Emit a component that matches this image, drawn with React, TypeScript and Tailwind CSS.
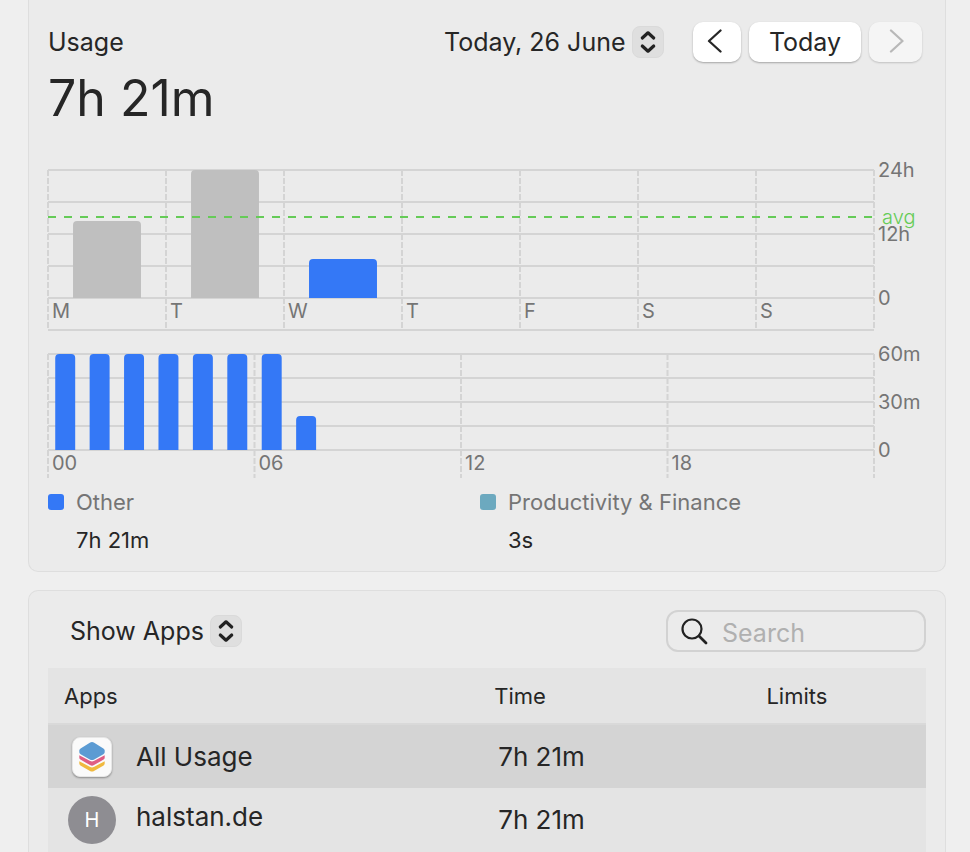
import { useState } from "react";
import type { ReactNode } from "react";

const WEEK = [
  { day: "M", hours: 14.4 },
  { day: "T", hours: 24 },
  { day: "W", hours: 7.35, today: true },
  { day: "T", hours: 0 },
  { day: "F", hours: 0 },
  { day: "S", hours: 0 },
  { day: "S", hours: 0 },
];

const MINUTES = [60, 60, 60, 60, 60, 60, 60, 21];

const LEGEND = [
  { name: "Other", time: "7h 21m", swatch: "bg-[#3478f6]" },
  { name: "Productivity & Finance", time: "3s", swatch: "bg-[#6ca9bf]" },
];

function Stepper() {
  return (
    <span className="pointer-events-none absolute right-0 flex size-8 items-center justify-center rounded-lg border border-[#dadada] bg-[#dfdfdf]">
      <svg width="16" height="24" viewBox="0 0 16 24" fill="none" stroke="#222" strokeWidth="3.2" strokeLinecap="round" strokeLinejoin="round">
        <path d="M2.3 8 8 2.8 13.700 8M2.300 16 8 21.200 13.700 16" />
      </svg>
    </span>
  );
}

function PopUp({ label, options }: { label: string; options: string[] }) {
  return (
    <div className="relative flex items-center">
      <select aria-label={label} className="h-8 appearance-none bg-transparent pr-[38px] text-[25px] leading-8 outline-none">
        {options.map((o) => (
          <option key={o}>{o}</option>
        ))}
      </select>
      <Stepper />
    </div>
  );
}

type PlotProps = {
  rows: number[];
  columns: number;
  plotHeight: number;
  height: number;
  yLabels: { y: number; text: string }[];
  xLabels: string[];
  children: ReactNode;
  title: string;
};

// Grid, axis labels and bars. x is in percent so the plot follows its container.
function Plot({ rows, columns, plotHeight, height, yLabels, xLabels, children, title }: PlotProps) {
  return (
    <svg role="img" aria-label={title} width="100%" height={height} className="block overflow-visible text-[20px]">
      <g stroke="#d4d4d4" strokeWidth="2">
        {rows.map((y) => (
          <line key={y} x1="0" x2="100%" y1={y} y2={y} />
        ))}
        {Array.from({ length: columns + 1 }, (_, i) => (
          <line key={i} x1={`${(i * 100) / columns}%`} x2={`${(i * 100) / columns}%`} y1="0" y2={height} strokeDasharray="6 2" />
        ))}
      </g>
      <svg width="100%" height={plotHeight}>
        {children}
      </svg>
      <g fill="#757575">
        {xLabels.map((text, i) => (
          <text key={i} x={`${(i * 100) / columns}%`} dx="4" y={plotHeight + 20}>
            {text}
          </text>
        ))}
        {yLabels.map(({ y, text }) => (
          <text key={y} x="100%" dx="4" y={y + 7}>
            {text}
          </text>
        ))}
      </g>
    </svg>
  );
}

function WeekChart() {
  return (
    <div className="relative">
      <Plot
        title="Usage per day"
        rows={[0, 32, 64, 96, 128, 160]}
        columns={7}
        plotHeight={128}
        height={160}
        xLabels={WEEK.map((d) => d.day)}
        yLabels={[
          { y: 0, text: "24h" },
          { y: 64, text: "12h" },
          { y: 128, text: "0" },
        ]}
      >
        {WEEK.filter((d) => d.hours > 0).map((d, i) => {
          const h = Math.round((d.hours / 24) * 128);
          return (
            <rect
              key={i}
              x={`${((i + 0.212) * 100) / 7}%`}
              y={128 - h}
              width={`${57.6 / 7}%`}
              height={h + 8}
              rx="4"
              fill={d.today ? "#3478f6" : "#bfbfbf"}
            />
          );
        })}
        <line x1="0" x2="100%" y1="47" y2="47" stroke="#65cb57" strokeWidth="2" strokeDasharray="8 8" />
      </Plot>
      <span className="absolute top-[35px] left-full ml-2 text-[20px] leading-6 font-light text-[#65cb57]">avg</span>
    </div>
  );
}

function DayChart() {
  return (
    <Plot
      title="Usage per hour"
      rows={[0, 24, 48, 72, 96]}
      columns={4}
      plotHeight={96}
      height={124}
      xLabels={["00", "06", "12", "18"]}
      yLabels={[
        { y: 0, text: "60m" },
        { y: 48, text: "30m" },
        { y: 96, text: "0" },
      ]}
    >
      {MINUTES.map((m, i) => {
        const h = Math.round((m / 60) * 96);
        return (
          <rect key={i} x={`${((i + 0.21) * 100) / 24}%`} y={96 - h} width={`${58 / 24}%`} height={h + 8} rx="4" fill="#3478f6" />
        );
      })}
    </Plot>
  );
}

function Chevron({ d }: { d: string }) {
  return (
    <svg width="16" height="26" viewBox="0 0 16 26" fill="none" stroke="currentColor" strokeWidth="2.3" strokeLinecap="round" strokeLinejoin="round">
      <path d={d} />
    </svg>
  );
}

function AllUsageIcon() {
  return (
    <span className="flex size-10 items-center justify-center rounded-lg border border-[#e6e6e6] bg-[#fafafa] shadow-[0_1px_2px_rgba(0,0,0,0.35)]">
      <svg width="26" height="30" viewBox="0 0 26 30">
        <path d="M.3 19.2 11.2 25q1.8.9 3.6 0L25.7 19.2V21.6q0 1.2-1.1 1.8L15 28.9q-2 1.1-4 0L1.4 23.4Q.3 22.8.3 21.6Z" fill="#f0b93f" />
        <path d="M.3 13.2 11.2 19q1.8.9 3.6 0L25.7 13.2V15.8q0 1.2-1.1 1.8L15 23.1q-2 1.1-4 0L1.4 17.6Q.3 17 .3 15.8Z" fill="#df5d83" />
        <path
          d="M10.8.7q2.200-1.200 4.400 0l9.200 5.700q1.300.8 1.300 1.900v2q0 1.100-1.300 1.900l-9.200 5.300q-2.200 1.200-4.400 0L1.600 12.200Q.3 11.400.3 10.300v-2Q.3 7.200 1.600 6.400Z"
          fill="#5b9bd3"
          stroke="#fafafa"
          strokeWidth="1"
          paintOrder="stroke"
        />
      </svg>
    </span>
  );
}

export default function App() {
  const [query, setQuery] = useState("");

  return (
    <div className="flex min-h-screen flex-col bg-[#efefef] pr-6 pl-7 font-['Inter',sans-serif] text-[#262626]">
      {/* Usage */}
      <section className="rounded-b-[10px] border border-t-0 border-[#dedede] bg-[#ebebeb] px-[19px] pt-[22px] pb-[17px]">
        <header className="flex h-10 items-center gap-2 pr-1">
          <h1 className="mr-auto text-[25px] leading-8">Usage</h1>
          <div className="mr-[21px]">
            <PopUp label="Date" options={["Today, 26 June"]} />
          </div>
          <button
            aria-label="Previous day"
            className="flex h-10 w-12 items-center justify-center rounded-[10px] bg-white pr-1 shadow-[0_1px_2px_rgba(0,0,0,0.3)]"
          >
            <Chevron d="M13.5 1.5 2 12 13.5 22.5" />
          </button>
          <button className="h-10 w-28 rounded-[10px] bg-white text-[25px] leading-8 shadow-[0_1px_2px_rgba(0,0,0,0.3)]">Today</button>
          <button
            aria-label="Next day"
            disabled
            className="flex h-10 w-[53px] items-center justify-center rounded-[10px] bg-[#f5f5f5] text-[#b8b8b8] shadow-[0_1px_2px_rgba(0,0,0,0.18)]"
          >
            <Chevron d="M3 1.5 14.5 12 3 22.5" />
          </button>
        </header>
        <p className="mt-2 text-[50px] leading-[56px]">7h 21m</p>

        <div className="mt-11 space-y-6 pr-[52px]">
          <WeekChart />
          <DayChart />
        </div>

        <dl className="mt-2.5 grid grid-cols-2 pr-3.5 text-[22px] leading-7">
          {LEGEND.map((item) => (
            <div key={item.name}>
              <dt className="flex items-center gap-3 text-[#757575]">
                <span className={`size-4 rounded-[3px] ${item.swatch}`} />
                {item.name}
              </dt>
              <dd className="mt-2.5 pl-7">{item.time}</dd>
            </div>
          ))}
        </dl>
      </section>

      {/* Apps */}
      <section className="mt-[18px] flex-1 rounded-t-[10px] border border-b-0 border-[#dedede] bg-[#ebebeb] px-[19px] pt-[19px]">
        <div className="flex items-center justify-between pl-[22px]">
          <PopUp label="Show" options={["Show Apps"]} />
          <label className="flex h-[42px] w-[260px] items-center gap-3.5 rounded-xl border-2 border-[#d2d2d2] px-3">
            <svg width="28" height="28" viewBox="0 0 28 28" fill="none" stroke="#222" strokeLinecap="round" className="shrink-0">
              <circle cx="12" cy="12" r="9.500" strokeWidth="2.200" />
              <path d="m19 19 7 7" strokeWidth="2.800" />
            </svg>
            <input
              type="search"
              aria-label="Search"
              placeholder="Search"
              value={query}
              onChange={(e) => setQuery(e.target.value)}
              className="w-full min-w-0 bg-transparent pt-1 text-[25px] leading-8 outline-none placeholder:text-[#b0b0b0]"
            />
          </label>
        </div>

        <table className="mt-4 w-full table-fixed bg-[#e4e4e4] text-left">
          <thead className="text-[22px] leading-7">
            <tr className="h-14 border-b-2 border-[#d9d9d9]">
              <th className="w-[49%] pl-4 font-normal">Apps</th>
              <th className="w-[31%] pl-4 font-normal">Time</th>
              <th className="pl-4 font-normal">Limits</th>
            </tr>
          </thead>
          <tbody className="text-[26px] leading-8">
            <tr className="h-16 bg-[#d4d4d4]">
              <td className="pl-5">
                <div className="flex items-center gap-5">
                  <span className="flex w-12 justify-center">
                    <AllUsageIcon />
                  </span>
                  All Usage
                </div>
              </td>
              <td className="pl-5">7h 21m</td>
              <td />
            </tr>
            <tr className="h-16">
              <td className="pl-5">
                <div className="flex gap-5">
                  <span className="flex size-12 items-center justify-center rounded-full bg-[#8e8d92] text-[20px] text-white">H</span>
                  <span className="pt-[5px]">halstan.de</span>
                </div>
              </td>
              <td className="pl-5">7h 21m</td>
              <td />
            </tr>
          </tbody>
        </table>
      </section>
    </div>
  );
}
